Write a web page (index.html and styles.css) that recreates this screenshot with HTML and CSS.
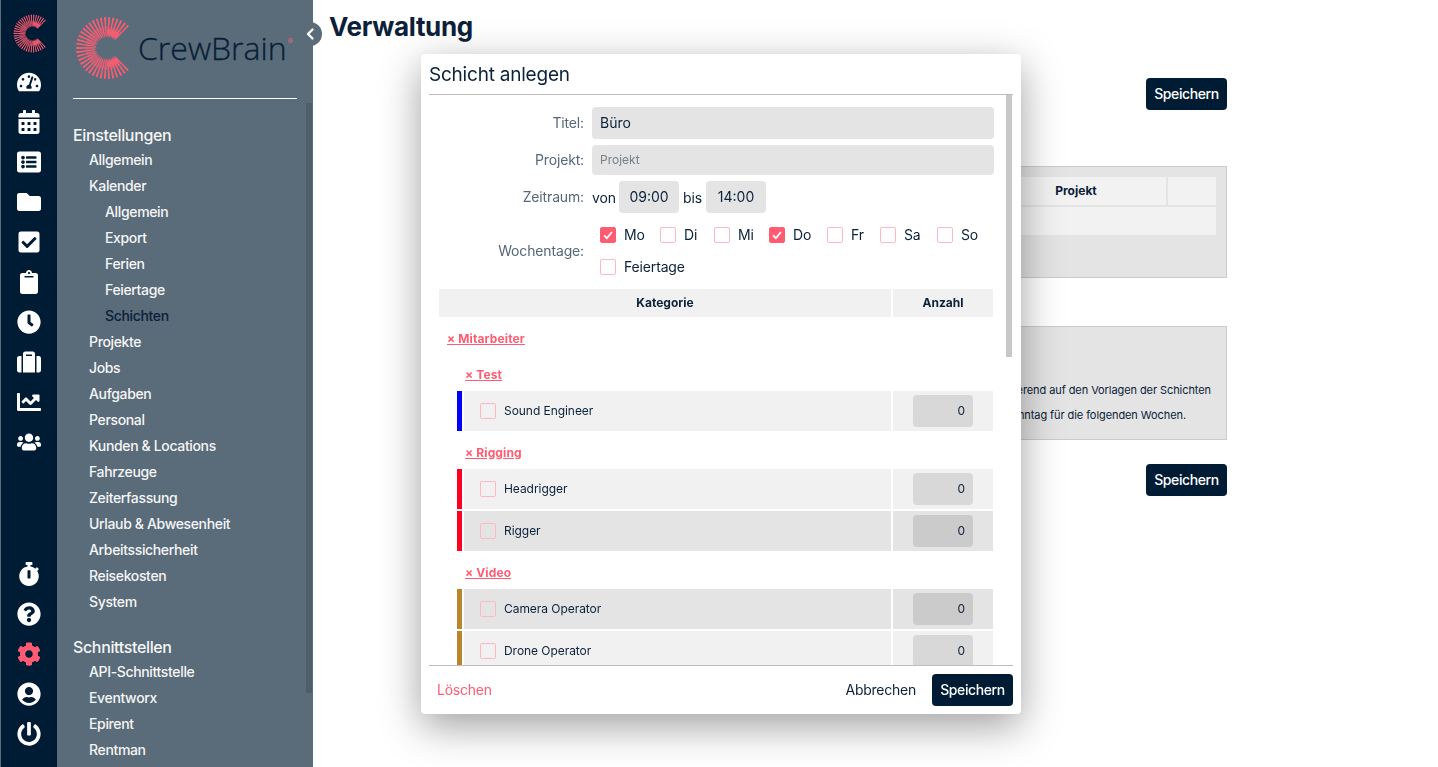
FILE: index.html
```html
<!DOCTYPE html>
<html lang="de">
<head>
<meta charset="utf-8">
<title>CrewBrain – Verwaltung</title>
<link rel="stylesheet" href="styles.css">
</head>
<body>
<svg class="defs" width="0" height="0" aria-hidden="true">
  <symbol id="burst" viewBox="0 0 64 64">
    <path class="burst-rays" d="M46.85 17.15A21 21 0 1 0 46.85 46.85"/>
    <path class="burst-core" d="M44 20A17 17 0 1 0 44 44"/>
    <path class="burst-solid" d="M43 20.7A16 16 0 0 0 32 16"/>
    <path class="burst-solid" d="M43 43.3A16 16 0 0 1 32 48"/>
  </symbol>
</svg>
<div class="app">
  <nav class="rail">
    <div class="rail-group">
      <svg class="rail-logo"><use href="#burst"/></svg>
      <a class="rail-item"><svg class="ico" viewBox="0 0 576 512"><path d="M288 32C128.94 32 0 160.94 0 320c0 52.8 14.25 102.26 39.06 144.8 5.61 9.62 16.3 15.2 27.44 15.2h443c11.14 0 21.83-5.58 27.44-15.2C561.75 422.26 576 372.8 576 320c0-159.06-128.94-288-288-288zm0 64c14.71 0 26.58 10.13 30.32 23.65-1.11 2.26-2.64 4.23-3.45 6.67l-9.22 27.67c-5.13 3.49-10.97 6.01-17.64 6.01-17.67 0-32-14.33-32-32S270.33 96 288 96zM96 384c-17.67 0-32-14.33-32-32s14.33-32 32-32 32 14.33 32 32-14.33 32-32 32zm48-160c-17.67 0-32-14.33-32-32s14.33-32 32-32 32 14.33 32 32-14.33 32-32 32zm246.77-72.41l-61.33 184C343.13 347.33 352 364.54 352 384c0 11.72-3.38 22.55-8.88 32H232.88c-5.5-9.45-8.88-20.28-8.88-32 0-33.94 26.5-61.43 59.9-63.59l61.34-184.01c4.17-12.56 17.73-19.45 30.36-15.17 12.57 4.19 19.35 17.79 15.17 30.36zm14.66 57.2l15.52-46.55c3.47-1.29 7.13-2.23 11.05-2.23 17.67 0 32 14.33 32 32s-14.33 32-32 32c-11.38-.01-20.89-6.28-26.57-15.22zM480 384c-17.67 0-32-14.33-32-32s14.33-32 32-32 32 14.33 32 32-14.33 32-32 32z"/></svg></a>
      <a class="rail-item"><svg class="ico" viewBox="0 0 448 512"><path d="M0 464c0 26.5 21.5 48 48 48h352c26.5 0 48-21.5 48-48V192H0v272zm320-196c0-6.6 5.4-12 12-12h40c6.6 0 12 5.4 12 12v40c0 6.6-5.4 12-12 12h-40c-6.6 0-12-5.4-12-12v-40zm0 128c0-6.6 5.4-12 12-12h40c6.6 0 12 5.4 12 12v40c0 6.6-5.4 12-12 12h-40c-6.6 0-12-5.4-12-12v-40zM192 268c0-6.6 5.4-12 12-12h40c6.6 0 12 5.4 12 12v40c0 6.6-5.4 12-12 12h-40c-6.6 0-12-5.4-12-12v-40zm0 128c0-6.6 5.4-12 12-12h40c6.6 0 12 5.4 12 12v40c0 6.6-5.4 12-12 12h-40c-6.6 0-12-5.4-12-12v-40zM64 268c0-6.6 5.4-12 12-12h40c6.6 0 12 5.4 12 12v40c0 6.6-5.4 12-12 12H76c-6.6 0-12-5.4-12-12v-40zm0 128c0-6.6 5.4-12 12-12h40c6.6 0 12 5.4 12 12v40c0 6.6-5.4 12-12 12H76c-6.6 0-12-5.4-12-12v-40zM400 64h-48V16c0-8.8-7.2-16-16-16h-32c-8.8 0-16 7.2-16 16v48H160V16c0-8.8-7.2-16-16-16h-32c-8.8 0-16 7.2-16 16v48H48C21.5 64 0 85.5 0 112v48h448v-48c0-26.5-21.5-48-48-48z"/></svg></a>
      <a class="rail-item"><svg class="ico" viewBox="0 0 512 512"><path d="M464 480H48c-26.51 0-48-21.49-48-48V80c0-26.51 21.49-48 48-48h416c26.51 0 48 21.49 48 48v352c0 26.51-21.49 48-48 48zM128 120c-22.091 0-40 17.909-40 40s17.909 40 40 40 40-17.909 40-40-17.909-40-40-40zm0 96c-22.091 0-40 17.909-40 40s17.909 40 40 40 40-17.909 40-40-17.909-40-40-40zm0 96c-22.091 0-40 17.909-40 40s17.909 40 40 40 40-17.909 40-40-17.909-40-40-40zm288-136v-32c0-6.627-5.373-12-12-12H204c-6.627 0-12 5.373-12 12v32c0 6.627 5.373 12 12 12h200c6.627 0 12-5.373 12-12zm0 96v-32c0-6.627-5.373-12-12-12H204c-6.627 0-12 5.373-12 12v32c0 6.627 5.373 12 12 12h200c6.627 0 12-5.373 12-12zm0 96v-32c0-6.627-5.373-12-12-12H204c-6.627 0-12 5.373-12 12v32c0 6.627 5.373 12 12 12h200c6.627 0 12-5.373 12-12z"/></svg></a>
      <a class="rail-item"><svg class="ico" viewBox="0 0 512 512"><path d="M464 128H272l-64-64H48C21.49 64 0 85.49 0 112v288c0 26.51 21.49 48 48 48h416c26.51 0 48-21.49 48-48V176c0-26.51-21.49-48-48-48z"/></svg></a>
      <a class="rail-item"><svg class="ico" viewBox="0 0 448 512"><path d="M400 480H48c-26.51 0-48-21.49-48-48V80c0-26.51 21.49-48 48-48h352c26.51 0 48 21.49 48 48v352c0 26.51-21.49 48-48 48zm-204.686-98.059l184-184c6.248-6.248 6.248-16.379 0-22.627l-22.627-22.627c-6.248-6.248-16.379-6.249-22.628 0L184 302.745l-70.059-70.059c-6.248-6.248-16.379-6.248-22.628 0l-22.627 22.627c-6.248 6.248-6.248 16.379 0 22.627l104 104c6.249 6.25 16.379 6.25 22.628.001z"/></svg></a>
      <a class="rail-item"><svg class="ico" viewBox="0 0 384 512"><path d="M384 112v352c0 26.51-21.49 48-48 48H48c-26.51 0-48-21.49-48-48V112c0-26.51 21.49-48 48-48h80c0-35.29 28.71-64 64-64s64 28.71 64 64h80c26.51 0 48 21.49 48 48zM192 40c-13.255 0-24 10.745-24 24s10.745 24 24 24 24-10.745 24-24-10.745-24-24-24m96 114v-20a6 6 0 0 0-6-6H102a6 6 0 0 0-6 6v20a6 6 0 0 0 6 6h180a6 6 0 0 0 6-6z"/></svg></a>
      <a class="rail-item"><svg class="ico" viewBox="0 0 512 512"><path d="M256,8C119,8,8,119,8,256S119,504,256,504,504,393,504,256,393,8,256,8Zm92.49,313h0l-20,25a16,16,0,0,1-22.49,2.5h0l-67-49.72a40,40,0,0,1-15-31.23V112a16,16,0,0,1,16-16h32a16,16,0,0,1,16,16V256l58,42.5A16,16,0,0,1,348.49,321Z"/></svg></a>
      <a class="rail-item"><svg class="ico" viewBox="0 0 512 512"><path d="M128 480h256V80c0-26.5-21.5-48-48-48H176c-26.5 0-48 21.5-48 48v400zm64-384h128v32H192V96zm320 80v256c0 26.5-21.5 48-48 48h-48V128h48c26.5 0 48 21.5 48 48zM96 480H48c-26.5 0-48-21.5-48-48V176c0-26.5 21.5-48 48-48h48v352z"/></svg></a>
      <a class="rail-item"><svg class="ico" viewBox="0 0 512 512"><path d="M496 384H64V80c0-8.84-7.16-16-16-16H16C7.16 64 0 71.16 0 80v336c0 17.67 14.33 32 32 32h464c8.84 0 16-7.16 16-16v-32c0-8.84-7.16-16-16-16zM464 96H345.94c-21.38 0-32.09 25.85-16.97 40.97l32.4 32.4L288 242.75l-73.37-73.37c-12.5-12.5-32.76-12.5-45.25 0l-68.69 68.69c-6.25 6.25-6.25 16.38 0 22.63l22.62 22.62c6.25 6.25 16.38 6.25 22.63 0L192 237.25l73.37 73.37c12.5 12.5 32.76 12.5 45.25 0l96-96 32.4 32.4c15.12 15.12 40.97 4.41 40.97-16.97V112c0-8.84-7.16-16-16-16z"/></svg></a>
      <a class="rail-item"><svg class="ico" viewBox="0 0 640 512"><path d="M96 224c35.3 0 64-28.7 64-64s-28.7-64-64-64-64 28.7-64 64 28.7 64 64 64zm448 0c35.3 0 64-28.7 64-64s-28.7-64-64-64-64 28.7-64 64 28.7 64 64 64zm32 32h-64c-17.6 0-33.5 7.1-45.1 18.6 40.3 22.1 68.9 62 75.1 109.4h66c17.7 0 32-14.3 32-32v-32c0-35.3-28.7-64-64-64zm-256 0c61.9 0 112-50.1 112-112S381.9 32 320 32 208 82.1 208 144s50.1 112 112 112zm76.8 32h-8.3c-20.8 10-43.9 16-68.5 16s-47.6-6-68.5-16h-8.3C179.6 288 128 339.6 128 403.2V432c0 26.5 21.5 48 48 48h288c26.5 0 48-21.5 48-48v-28.8c0-63.6-51.6-115.2-115.2-115.2zm-223.7-13.4C161.5 263.1 145.6 256 128 256H64c-35.3 0-64 28.7-64 64v32c0 17.7 14.3 32 32 32h65.9c6.3-47.4 34.9-87.3 75.2-109.4z"/></svg></a>
    </div>
    <div class="rail-group">
      <a class="rail-item"><svg class="ico" viewBox="0 0 448 512"><path d="M432 304c0 114.9-93.1 208-208 208S16 418.9 16 304c0-104 76.3-190.2 176-205.5V64h-28c-6.6 0-12-5.4-12-12V12c0-6.6 5.4-12 12-12h120c6.6 0 12 5.4 12 12v40c0 6.6-5.4 12-12 12h-28v34.5c37.5 5.8 71.7 21.6 99.7 44.6l27.5-27.5c4.7-4.7 12.3-4.7 17 0l28.3 28.3c4.7 4.7 4.7 12.3 0 17l-29.4 29.4-.6.6C419.7 223.3 432 262.2 432 304zm-176 36V188.5c0-6.6-5.4-12-12-12h-40c-6.6 0-12 5.4-12 12V340c0 6.6 5.4 12 12 12h40c6.6 0 12-5.4 12-12z"/></svg></a>
      <a class="rail-item"><svg class="ico" viewBox="0 0 512 512"><path d="M504 256c0 136.997-111.043 248-248 248S8 392.997 8 256C8 119.083 119.043 8 256 8s248 111.083 248 248zM262.655 90c-54.497 0-89.255 22.957-116.549 63.758-3.536 5.286-2.353 12.415 2.715 16.258l34.699 26.31c5.205 3.947 12.621 3.008 16.665-2.122 17.864-22.658 30.113-35.797 57.303-35.797 20.429 0 45.698 13.148 45.698 32.958 0 14.976-12.363 22.667-32.534 33.976C247.128 238.528 216 254.941 216 296v4c0 6.627 5.373 12 12 12h56c6.627 0 12-5.373 12-12v-1.333c0-28.462 83.186-29.647 83.186-106.667 0-58.002-60.165-102-116.531-102zM256 338c-25.365 0-46 20.635-46 46 0 25.364 20.635 46 46 46s46-20.636 46-46c0-25.365-20.635-46-46-46z"/></svg></a>
      <a class="rail-item rail-item-active"><svg class="ico" viewBox="0 0 512 512"><path d="M487.4 315.7l-42.6-24.6c4.3-23.2 4.3-47 0-70.2l42.6-24.6c4.9-2.8 7.1-8.6 5.5-14-11.1-35.6-30-67.8-54.7-94.6-3.8-4.1-10-5.1-14.8-2.3L380.8 110c-17.9-15.4-38.5-27.3-60.8-35.1V25.8c0-5.6-3.9-10.5-9.4-11.7-36.7-8.2-74.3-7.8-109.2 0-5.5 1.2-9.4 6.1-9.4 11.7V75c-22.2 7.9-42.8 19.8-60.8 35.1L88.7 85.5c-4.9-2.8-11-1.9-14.8 2.3-24.7 26.7-43.6 58.9-54.7 94.6-1.7 5.4.6 11.2 5.5 14L67.3 221c-4.3 23.2-4.3 47 0 70.2l-42.6 24.6c-4.9 2.8-7.1 8.6-5.5 14 11.1 35.6 30 67.8 54.7 94.6 3.8 4.1 10 5.1 14.8 2.3l42.6-24.6c17.9 15.4 38.5 27.3 60.8 35.1v49.2c0 5.6 3.9 10.5 9.4 11.7 36.7 8.2 74.3 7.8 109.2 0 5.5-1.2 9.4-6.1 9.4-11.7v-49.2c22.2-7.9 42.8-19.8 60.8-35.1l42.6 24.6c4.9 2.8 11 1.9 14.8-2.3 24.7-26.7 43.6-58.9 54.7-94.6 1.5-5.5-.7-11.3-5.6-14.1zM256 336c-44.1 0-80-35.9-80-80s35.9-80 80-80 80 35.9 80 80-35.9 80-80 80z"/></svg></a>
      <a class="rail-item"><svg class="ico" viewBox="0 0 496 512"><path d="M248 8C111 8 0 119 0 256s111 248 248 248 248-111 248-248S385 8 248 8zm0 96c48.6 0 88 39.4 88 88s-39.4 88-88 88-88-39.4-88-88 39.4-88 88-88zm0 344c-58.7 0-111.3-26.6-146.5-68.2 18.8-35.4 55.6-59.8 98.5-59.8 2.4 0 4.8.4 7.1 1.1 13 4.2 26.6 6.9 40.9 6.9 14.3 0 28-2.7 40.9-6.9 2.3-.7 4.7-1.1 7.1-1.1 42.9 0 79.7 24.4 98.5 59.8C359.3 421.4 306.7 448 248 448z"/></svg></a>
      <a class="rail-item"><svg class="ico" viewBox="0 0 512 512"><path d="M400 54.1c63 45 104 118.6 104 201.9 0 136.8-110.8 247.7-247.5 248C120 504.3 8.2 393 8 256.4 7.9 173.1 48.9 99.3 111.8 54.2c11.7-8.3 28-4.8 35 7.7L162.6 90c5.9 10.5 3.1 23.8-6.6 31-41.5 30.8-68 79.6-68 134.9-.1 92.3 74.5 168.1 168 168.1 91.6 0 168.6-74.2 168-169.1-.3-51.8-24.7-101.8-68.1-134-9.7-7.2-12.4-20.5-6.5-30.9l15.8-28.1c7-12.4 23.2-16.1 34.8-7.8zM296 264V24c0-13.3-10.7-24-24-24h-32c-13.3 0-24 10.7-24 24v240c0 13.3 10.7 24 24 24h32c13.3 0 24-10.7 24-24z"/></svg></a>
    </div>
  </nav>

  <aside class="sidebar">
    <div class="brand">
      <svg class="brand-mark"><use href="#burst"/></svg>
      <span class="brand-name">CrewBrain</span><span class="brand-reg">®</span>
    </div>
    <div class="brand-rule"></div>
    <div class="side-nav">
      <div class="side-head">Einstellungen</div>
      <a class="side-link">Allgemein</a>
      <a class="side-link">Kalender</a>
      <a class="side-link side-sub">Allgemein</a>
      <a class="side-link side-sub">Export</a>
      <a class="side-link side-sub">Ferien</a>
      <a class="side-link side-sub">Feiertage</a>
      <a class="side-link side-sub side-active">Schichten</a>
      <a class="side-link">Projekte</a>
      <a class="side-link">Jobs</a>
      <a class="side-link">Aufgaben</a>
      <a class="side-link">Personal</a>
      <a class="side-link">Kunden &amp; Locations</a>
      <a class="side-link">Fahrzeuge</a>
      <a class="side-link">Zeiterfassung</a>
      <a class="side-link">Urlaub &amp; Abwesenheit</a>
      <a class="side-link">Arbeitssicherheit</a>
      <a class="side-link">Reisekosten</a>
      <a class="side-link">System</a>
      <div class="side-head side-head-next">Schnittstellen</div>
      <a class="side-link">API-Schnittstelle</a>
      <a class="side-link">Eventworx</a>
      <a class="side-link">Epirent</a>
      <a class="side-link">Rentman</a>
    </div>
    <div class="side-scroll"></div>
    <button class="side-toggle" aria-label="Menü einklappen"><svg viewBox="0 0 10 14"><path d="M7.5 2.5 3 7l4.5 4.5"/></svg></button>
  </aside>

  <main class="main">
    <h1 class="title">Verwaltung</h1>
    <div class="content">
      <div class="save-row"><button class="btn">Speichern</button></div>
      <section class="panel panel-table">
        <div class="pt-grid">
          <div class="pt-cell"></div>
          <div class="pt-cell"></div>
          <div class="pt-cell">Projekt</div>
          <div class="pt-cell"></div>
          <div class="pt-cell pt-row"></div>
        </div>
      </section>
      <section class="panel panel-text">
        <p class="panel-line panel-line-a">basierend auf den Vorlagen der Schichten</p>
        <p class="panel-line panel-line-b">Sonntag für die folgenden Wochen.</p>
      </section>
      <div class="save-row save-row-bottom"><button class="btn">Speichern</button></div>
    </div>
  </main>
</div>

<div class="modal" role="dialog">
  <div class="modal-head">Schicht anlegen</div>
  <div class="modal-body">
    <div class="form-row form-row-title">
      <label class="form-label">Titel:</label>
      <div class="field field-title">Büro</div>
    </div>
    <div class="form-row form-row-project">
      <label class="form-label">Projekt:</label>
      <div class="field field-project">Projekt</div>
    </div>
    <div class="form-row form-row-time">
      <label class="form-label">Zeitraum:</label>
      <div class="time-group">
        <span class="time-word">von</span><div class="field field-time">09:00</div>
        <span class="time-word time-bis">bis</span><div class="field field-time">14:00</div>
      </div>
    </div>
    <div class="form-row form-row-days">
      <label class="form-label">Wochentage:</label>
      <div class="days">
        <div class="days-row">
          <span class="day day-mo"><span class="cb cb-on"><svg viewBox="0 0 16 16"><path d="M3.5 8.5 6.7 11.7 12.5 4.5"/></svg></span>Mo</span>
          <span class="day day-di"><span class="cb"></span>Di</span>
          <span class="day day-mi"><span class="cb"></span>Mi</span>
          <span class="day day-do"><span class="cb cb-on"><svg viewBox="0 0 16 16"><path d="M3.5 8.5 6.7 11.7 12.5 4.5"/></svg></span>Do</span>
          <span class="day day-fr"><span class="cb"></span>Fr</span>
          <span class="day day-sa"><span class="cb"></span>Sa</span>
          <span class="day"><span class="cb"></span>So</span>
        </div>
        <div class="days-row"><span class="day"><span class="cb"></span>Feiertage</span></div>
      </div>
    </div>
    <div class="cat-table">
      <div class="cat-head"><div class="cat-h-main">Kategorie</div><div class="cat-h-num">Anzahl</div></div>
      <a class="cat-group">× Mitarbeiter</a>
      <a class="cat-sub cat-sub-first">× Test</a>
      <div class="cat-row"><span class="bar bar-blue"></span><div class="cat-name cat-light"><span class="cb"></span><span class="cat-label">Sound Engineer</span></div><div class="cat-num cat-light"><div class="num-input">0</div></div></div>
      <a class="cat-sub">× Rigging</a>
      <div class="cat-row"><span class="bar bar-red"></span><div class="cat-name cat-light"><span class="cb"></span><span class="cat-label">Headrigger</span></div><div class="cat-num cat-light"><div class="num-input">0</div></div></div>
      <div class="cat-row"><span class="bar bar-red"></span><div class="cat-name cat-dark"><span class="cb"></span><span class="cat-label">Rigger</span></div><div class="cat-num cat-dark"><div class="num-input">0</div></div></div>
      <a class="cat-sub">× Video</a>
      <div class="cat-row"><span class="bar bar-gold"></span><div class="cat-name cat-dark"><span class="cb"></span><span class="cat-label">Camera Operator</span></div><div class="cat-num cat-dark"><div class="num-input">0</div></div></div>
      <div class="cat-row"><span class="bar bar-gold"></span><div class="cat-name cat-light"><span class="cb"></span><span class="cat-label">Drone Operator</span></div><div class="cat-num cat-light"><div class="num-input">0</div></div></div>
    </div>
    <div class="modal-scroll"></div>
  </div>
  <div class="modal-foot">
    <a class="link-danger">Löschen</a>
    <div class="foot-actions"><a class="link-plain">Abbrechen</a><button class="btn">Speichern</button></div>
  </div>
</div>
</body>
</html>
```
FILE: styles.css
```css
* { box-sizing: border-box; }
html, body { margin: 0; height: 100%; overflow: hidden; }
body { font-family: Inter, "Liberation Sans", sans-serif; color: #0b2139; background: #fff; font-size: 14px; }
.defs { position: absolute; }
.burst-rays { fill: none; stroke: #ff5c72; stroke-width: 20; stroke-dasharray: 1.3 1.55; }
.burst-core { fill: none; stroke: #ff5c72; stroke-width: 9; stroke-dasharray: 1.1 .5; opacity: .55; }
.burst-solid { fill: none; stroke: #ff5c72; stroke-width: 6; opacity: .75; }

.app { display: flex; height: 767px; }

.rail { width: 57px; flex: none; background: #001c35; border-left: 1px solid #5a6b79; display: flex; flex-direction: column; justify-content: space-between; padding: 14px 0 13px; }
.rail-group { display: flex; flex-direction: column; align-items: center; }
.rail-logo { width: 39px; height: 39px; margin: 0 0 9px 7px; }
.rail-item { width: 40px; height: 40px; display: flex; align-items: center; justify-content: center; color: #fff; }
.ico { width: 24px; height: 24px; fill: currentColor; }
.rail-item-active { color: #ff5c72; }

.sidebar { width: 256px; flex: none; background: #5a6b79; position: relative; color: #f5f6f7; }
.brand { height: 98px; padding: 16px 0 0 18px; display: flex; align-items: flex-start; }
.brand-mark { width: 64px; height: 64px; flex: none; }
.brand-name { font-family: "Open Sans", sans-serif; font-weight: 300; font-size: 32px; line-height: 34px; margin: 15px 0 0 -1px; color: #061f38; -webkit-text-stroke: .3px #061f38; }
.brand-reg { font-size: 8px; line-height: 10px; color: #e8697c; margin: 20px 0 0 1px; }
.brand-rule { height: 1px; background: #fff; margin: 0 16px; }
.side-nav { padding: 24px 0 0 16px; display: flex; flex-direction: column; height: 668px; overflow: hidden; letter-spacing: -.025em; }
.side-head { font-size: 16px; line-height: 24px; font-weight: 500; flex: none; }
.side-head-next { margin-top: 20px; }
.side-link { line-height: 26px; height: 26px; padding-left: 16px; flex: none; font-weight: 500; }
.side-sub { padding-left: 32px; }
.side-active { color: #0b2139; }
.side-scroll { position: absolute; left: 249px; top: 103px; width: 6px; height: 590px; background: #4d5d6a; }
.side-toggle { position: absolute; left: 241px; top: 22px; width: 24px; height: 24px; border: 0; border-radius: 50%; padding: 0; background: #5a6b79; display: flex; align-items: center; justify-content: center; }
.side-toggle svg { width: 10px; height: 14px; fill: none; stroke: #fff; stroke-width: 2.4; stroke-linecap: round; stroke-linejoin: round; }

.main { flex: 1; padding-top: 10px; min-width: 0; }
.title { margin: 0; padding-left: 16px; font-size: 26px; line-height: 34px; font-weight: 700; color: #0b2139; letter-spacing: -.3px; }
.content { width: 703px; margin: 0 auto; padding-top: 34px; }
.save-row { display: flex; justify-content: flex-end; }
.save-row-bottom { margin-top: 24px; }
.btn { height: 32px; padding: 0; border: 0; border-radius: 4px; background: #001c35; color: #fff; font: 500 14px/32px Inter, sans-serif; width: 81px; letter-spacing: -.4px; }
.panel { background: #e4e4e4; border: 1px solid #cbcbcb; }
.panel-table { margin-top: 56px; height: 112px; padding: 10px; }
.pt-grid { display: grid; grid-template-columns: 1fr 200px 180px 48px; grid-auto-rows: 28px; gap: 2px; }
.pt-cell { background: #f2f2f2; font-size: 12px; font-weight: 700; text-align: center; line-height: 28px; }
.pt-row { grid-column: 1 / -1; }
.panel-text { margin-top: 48px; height: 114px; padding-top: 51px; font-size: 11px; text-align: right; letter-spacing: -.08px; }
.panel-line { margin: 0; line-height: 25px; white-space: nowrap; }
.panel-line-a { padding-right: 15px; }
.panel-line-b { padding-right: 40px; }

.modal { position: fixed; left: 421px; top: 54px; width: 600px; height: 660px; background: #fff; border-radius: 4px; box-shadow: 0 12px 40px rgba(0,0,0,.38); padding: 0 8px; display: flex; flex-direction: column; }
.modal-head { height: 41px; padding-top: 1px; border-bottom: 1px solid #bdbdbd; font-size: 19px; line-height: 40px; letter-spacing: -.22px; color: #0b2139; flex: none; }
.modal-body { position: relative; flex: 1; overflow: hidden; min-height: 0; }
.modal-scroll { position: absolute; right: 1px; top: 0; width: 6px; height: 262px; background: #c8c8c8; }
.form-row { display: flex; width: 565px; letter-spacing: -.15px; }
.form-label { width: 155px; text-align: right; color: #56687a; padding-bottom: 2px; flex: none; }
.form-row-title { margin-top: 12px; height: 32px; align-items: center; }
.form-row-project { margin-top: 6px; height: 30px; align-items: center; }
.form-row-time { margin-top: 6px; height: 32px; align-items: center; }
.form-row-days { margin-top: 14px; height: 48px; align-items: center; }
.field { background: #e4e4e4; border-radius: 4px; }
.field-title { margin-left: 8px; flex: 1; height: 32px; line-height: 32px; padding-left: 8px; letter-spacing: 0; }
.field-project { margin-left: 8px; flex: 1; height: 30px; line-height: 30px; padding-left: 8px; font-size: 12px; color: #75808a; letter-spacing: 0; }
.time-group { margin-left: 8px; display: flex; align-items: center; }
.time-word { width: 23px; margin-right: 4px; }
.time-bis { width: 19px; }
.field-time { width: 60px; height: 32px; line-height: 32px; text-align: center; margin-right: 4px; letter-spacing: 0; }
.days { margin-left: 16px; display: flex; flex-direction: column; gap: 16px; }
.days-row { display: flex; height: 16px; }
.day { display: flex; align-items: center; line-height: 16px; gap: 8px; }
.day-mo { width: 60px; } .day-di { width: 54px; } .day-mi { width: 55px; } .day-do { width: 58px; } .day-fr { width: 53px; } .day-sa { width: 57px; }
.cb { width: 16px; height: 16px; border: 1px solid #ffb8c3; border-radius: 2px; flex: none; display: inline-block; }
.cb-on { background: #ff5c72; border-color: #ff5c72; }
.cb-on svg { display: block; width: 14px; height: 14px; fill: none; stroke: #fff; stroke-width: 2; }

.cat-table { width: 554px; margin: 14px 0 0 10px; font-size: 12px; }
.cat-head { display: flex; gap: 2px; height: 28px; font-weight: 700; line-height: 28px; text-align: center; }
.cat-h-main { flex: 1; background: #f1f1f1; }
.cat-h-num { width: 100px; background: #f1f1f1; }
.cat-group, .cat-sub { display: block; color: #ff5c72; font-weight: 700; text-decoration: underline; line-height: 16px; letter-spacing: .13px; }
.cat-group { margin: 14px 0 0 8px; }
.cat-sub { margin: 14px 0 8px 26px; }
.cat-sub-first { margin-top: 20px; }
.cat-row { display: flex; height: 40px; margin: 0 0 2px 18px; gap: 2px; }
.bar { width: 5px; flex: none; }
.bar-blue { background: #0000ff; } .bar-red { background: #ff0022; } .bar-gold { background: #b9862b; }
.cat-name { flex: 1; display: flex; align-items: center; padding-left: 16px; gap: 8px; }
.cat-label { margin-bottom: 2px; letter-spacing: -.05px; }
.cat-num { width: 100px; display: flex; align-items: center; justify-content: center; }
.cat-light { background: #f1f1f1; }
.cat-dark { background: #e4e4e4; }
.num-input { width: 60px; height: 32px; line-height: 32px; border-radius: 4px; text-align: right; padding-right: 8px; }
.cat-light .num-input { background: #d8d8d8; }
.cat-dark .num-input { background: #cbcbcb; }

.modal-foot { height: 49px; flex: none; border-top: 1px solid #bdbdbd; display: flex; align-items: center; justify-content: space-between; padding: 0 0 0 8px; letter-spacing: -.25px; }
.link-danger { color: #ff5c72; padding-bottom: 1px; }
.foot-actions { display: flex; align-items: center; gap: 16px; }
.link-plain { color: #0b2139; padding-bottom: 1px; }
```
